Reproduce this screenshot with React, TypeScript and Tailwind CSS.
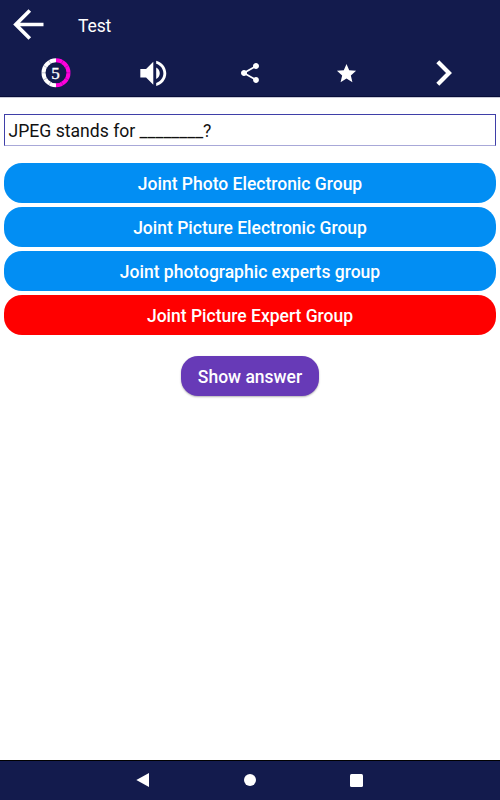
import React from "react";

const answers = [
  { text: "Joint Photo Electronic Group", wrong: false },
  { text: "Joint Picture Electronic Group", wrong: false },
  { text: "Joint photographic experts group", wrong: false },
  { text: "Joint Picture Expert Group", wrong: true },
];

function Timer() {
  return (
    <svg width="30" height="30" viewBox="0 0 30 30">
      <g fill="none" strokeWidth="4">
        <path d="M15 27.3A12.5 12.5 0 0 1 15 2.3" stroke="#fff" />
        <path d="M15 2.3A12.5 12.5 0 0 1 15 27.3" stroke="#ff00dc" />
      </g>
      <g stroke="#131b4d" strokeOpacity="0.4" strokeWidth="0.6">
        {[30, 60, 90, 120, 150, 210, 240, 270, 300, 330].map((a) => (
          <path key={a} d="M15 0V5" transform={`rotate(${a} 15 14.8)`} />
        ))}
      </g>
      <text x="14.6" y="20.5" textAnchor="middle" fontSize="17" fill="#fff" stroke="#fff" strokeWidth="0.35" className="font-['Liberation_Serif',serif]">
        5
      </text>
    </svg>
  );
}

export default function App() {
  return (
    <div className="flex h-[800px] w-[500px] flex-col bg-white font-['Roboto',sans-serif]">
      <header className="flex h-[97px] shrink-0 flex-col border-b border-[#070d38] bg-[#131b4d] text-white shadow-[0_1px_0_#c9cad8]">
        <div className="flex h-[49px] items-center pl-[13px]">
          <svg width="31" height="31" viewBox="0 0 31 31" fill="none" stroke="#fff" strokeWidth="3.7">
            <path d="M30.5 15.5H3M16.8 1.5L2.8 15.5L16.8 29.5" />
          </svg>
          <h1 className="ml-[34px] pt-[3px] text-[17.5px] leading-6 tracking-[-0.1px]">Test</h1>
        </div>
        <div className="grid h-12 grid-cols-5 place-items-center px-2 pt-[2px]">
          <Timer />
          <svg width="34.6" height="34.6" viewBox="0 0 24 24" fill="#fff">
            <path d="M3 9v6h4l5 5V4L7 9H3zm13.5 3c0-1.77-1.02-3.29-2.5-4.03v8.05c1.48-.73 2.5-2.25 2.5-4.02zM14 3.23v2.06c2.89.86 5 3.54 5 6.71s-2.11 5.85-5 6.71v2.06c4.01-.91 7-4.49 7-8.77s-2.99-7.86-7-8.77z" />
          </svg>
          <svg width="24" height="24" viewBox="0 0 24 24" fill="#fff">
            <path d="M18 16.08c-.76 0-1.44.3-1.96.77L8.91 12.7c.05-.23.09-.46.09-.7s-.04-.47-.09-.7l7.05-4.11c.54.5 1.25.81 2.04.81 1.66 0 3-1.34 3-3s-1.34-3-3-3-3 1.34-3 3c0 .24.04.47.09.7L8.04 9.81C7.5 9.31 6.79 9 6 9c-1.66 0-3 1.34-3 3s1.34 3 3 3c.79 0 1.5-.31 2.04-.81l7.12 4.16c-.05.21-.08.43-.08.65 0 1.61 1.31 2.92 2.92 2.92s2.92-1.31 2.92-2.92-1.31-2.92-2.92-2.92z" />
          </svg>
          <svg width="23" height="23" viewBox="0 0 24 24" fill="#fff">
            <path d="M12 17.27L18.18 21l-1.64-7.03L22 9.24l-7.19-.61L12 2 9.19 8.63 2 9.24l5.46 4.73L5.82 21z" />
          </svg>
          <svg width="18" height="28" viewBox="0 0 18 28" fill="none" stroke="#fff" strokeWidth="4.2">
            <path d="M2.8 2.8L14 14L2.8 25.2" />
          </svg>
        </div>
      </header>

      <main className="flex flex-1 flex-col px-1 pt-[17px]">
        <p className="flex h-8 items-center border border-b-[#a8a8d8] border-l-[#3f3fa8] border-r-[#3f3fa8] border-t-[#3f3fa8] pl-[3.5px] pt-[2px] text-[17.6px] leading-6 whitespace-pre text-[#111]">
          JPEG stands for ________?
        </p>
        <div className="mt-[17px] flex flex-col gap-[4.2px]">
          {answers.map((a) => (
            <button
              key={a.text}
              className={`flex h-[39.9px] items-center justify-center rounded-[18px] pt-[2px] text-[17.5px] leading-6 font-medium text-white ${a.wrong ? "bg-[#ff0000]" : "bg-[#028ef3]"}`}
            >
              {a.text}
            </button>
          ))}
        </div>
        <button className="mt-[21px] flex h-[39.5px] w-[138px] items-center justify-center self-center rounded-[17px] bg-[#673ab7] pt-[2px] text-[17.5px] leading-6 font-medium text-white shadow-[0_1px_2px_rgba(0,0,0,0.3)]">
          Show answer
        </button>
      </main>

      <nav className="flex h-10 shrink-0 items-center border-t border-black bg-[#131b4d] pl-[136px]">
        <svg width="13" height="14" viewBox="0 0 13 14" fill="#fff" className="-mt-px">
          <path d="M0.3 7L13 0V14Z" />
        </svg>
        <span className="-mt-px ml-[95px] h-3 w-3 rounded-full bg-white" />
        <span className="-mt-px ml-[94px] h-[13px] w-[13px] rounded-[1.5px] bg-white" />
      </nav>
    </div>
  );
}
